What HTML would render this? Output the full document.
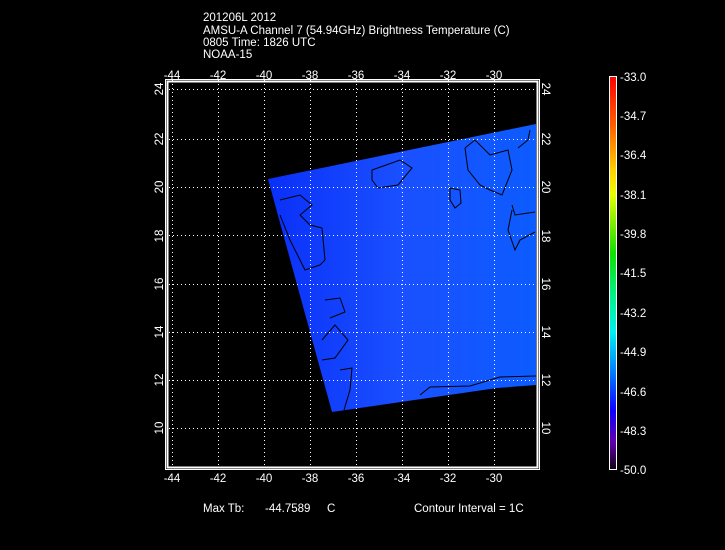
<!DOCTYPE html>
<html><head><meta charset="utf-8"><style>
html,body{margin:0;padding:0;background:#000;width:725px;height:550px;overflow:hidden}
svg{display:block}
text{font-family:"Liberation Sans",sans-serif;font-size:11.5px;fill:#fff}
</style></head><body>
<svg width="725" height="550" viewBox="0 0 725 550" xmlns="http://www.w3.org/2000/svg">
<defs>
<linearGradient id="cb" x1="0" y1="0" x2="0" y2="1">
<stop offset="0" stop-color="#ff0000"/>
<stop offset="0.12" stop-color="#ff5a00"/>
<stop offset="0.24" stop-color="#ffd000"/>
<stop offset="0.3" stop-color="#e8ff00"/>
<stop offset="0.45" stop-color="#10e000"/>
<stop offset="0.55" stop-color="#00f080"/>
<stop offset="0.65" stop-color="#00f0f0"/>
<stop offset="0.75" stop-color="#0080ff"/>
<stop offset="0.85" stop-color="#1000ff"/>
<stop offset="0.93" stop-color="#6000b0"/>
<stop offset="1" stop-color="#100010"/>
</linearGradient>
<linearGradient id="sw" x1="0" y1="0" x2="1" y2="0">
<stop offset="0" stop-color="#0a30f8"/>
<stop offset="0.5" stop-color="#1a50ff"/>
<stop offset="1" stop-color="#0c5cff"/>
</linearGradient>
</defs>
<text x="203" y="21">201206L 2012</text>
<text x="203" y="34">AMSU-A Channel 7 (54.94GHz) Brightness Temperature (C)</text>
<text x="203" y="46">0805 Time: 1826 UTC</text>
<text x="203" y="58">NOAA-15</text>

<polygon points="268,179 536,124 536,385 497,388 332,412" fill="url(#sw)"/>
<g fill="none" stroke="#000" stroke-width="1">
<polyline points="280,200 300,195 312,205 300,215 310,225 322,228 325,260 320,265 305,270 300,260 290,240 280,215"/>
<polyline points="372,170 400,160 412,168 398,185 378,188 372,180 372,170"/>
<polyline points="465,148 475,140 490,155 508,150 512,170 502,195 490,190 480,185 468,170 465,148"/>
<polyline points="450,188 460,190 461,203 455,208 450,200 450,188"/>
<polyline points="512,205 515,215 535,212"/>
<polyline points="512,210 508,230 515,250 520,240 535,232"/>
<polyline points="325,300 340,298 345,312 330,318"/>
<polyline points="322,340 335,325 348,340 335,358 322,360"/>
<polyline points="340,370 352,368 350,390 344,410"/>
<polyline points="420,395 430,387 470,386 500,377 536,376"/>
<polyline points="518,148 528,140 530,130"/>
</g>

<g stroke="#fff" stroke-width="1" stroke-dasharray="1,3" fill="none">
<line x1="172.5" y1="80" x2="172.5" y2="466"/>
<line x1="218.5" y1="80" x2="218.5" y2="466"/>
<line x1="264.5" y1="80" x2="264.5" y2="466"/>
<line x1="310.5" y1="80" x2="310.5" y2="466"/>
<line x1="356.5" y1="80" x2="356.5" y2="466"/>
<line x1="402.5" y1="80" x2="402.5" y2="466"/>
<line x1="448.5" y1="80" x2="448.5" y2="466"/>
<line x1="494.5" y1="80" x2="494.5" y2="466"/>
<line x1="169" y1="89.5" x2="536" y2="89.5"/>
<line x1="169" y1="139.5" x2="536" y2="139.5"/>
<line x1="169" y1="187.5" x2="536" y2="187.5"/>
<line x1="169" y1="235.5" x2="536" y2="235.5"/>
<line x1="169" y1="284.5" x2="536" y2="284.5"/>
<line x1="169" y1="332.5" x2="536" y2="332.5"/>
<line x1="169" y1="380.5" x2="536" y2="380.5"/>
<line x1="169" y1="428.5" x2="536" y2="428.5"/>
</g>
<rect x="165.5" y="79.5" width="374" height="390" fill="none" stroke="#fff" stroke-width="1"/>
<rect x="167.5" y="81.5" width="370" height="386" fill="none" stroke="#fff" stroke-width="2"/>

<g text-anchor="middle">
<text x="172" y="79">-44</text><text x="218" y="79">-42</text><text x="264" y="79">-40</text><text x="310" y="79">-38</text><text x="356" y="79">-36</text><text x="402" y="79">-34</text><text x="448" y="79">-32</text><text x="494" y="79">-30</text>
<text x="172" y="482">-44</text><text x="218" y="482">-42</text><text x="264" y="482">-40</text><text x="310" y="482">-38</text><text x="356" y="482">-36</text><text x="402" y="482">-34</text><text x="448" y="482">-32</text><text x="494" y="482">-30</text>
</g>
<g text-anchor="middle">
<text transform="translate(163,89) rotate(-90)">24</text>
<text transform="translate(163,139) rotate(-90)">22</text>
<text transform="translate(163,187) rotate(-90)">20</text>
<text transform="translate(163,236) rotate(-90)">18</text>
<text transform="translate(163,284) rotate(-90)">16</text>
<text transform="translate(163,332) rotate(-90)">14</text>
<text transform="translate(163,380) rotate(-90)">12</text>
<text transform="translate(163,428) rotate(-90)">10</text>
<text transform="translate(542,89) rotate(90)">24</text>
<text transform="translate(542,139) rotate(90)">22</text>
<text transform="translate(542,187) rotate(90)">20</text>
<text transform="translate(542,236) rotate(90)">18</text>
<text transform="translate(542,284) rotate(90)">16</text>
<text transform="translate(542,332) rotate(90)">14</text>
<text transform="translate(542,380) rotate(90)">12</text>
<text transform="translate(542,428) rotate(90)">10</text>
</g>

<rect x="609.5" y="76.5" width="7" height="393" fill="url(#cb)" stroke="#fff" stroke-width="1"/>
<g>
<text x="620" y="81">-33.0</text>
<text x="620" y="120">-34.7</text>
<text x="620" y="159">-36.4</text>
<text x="620" y="199">-38.1</text>
<text x="620" y="238">-39.8</text>
<text x="620" y="277">-41.5</text>
<text x="620" y="317">-43.2</text>
<text x="620" y="356">-44.9</text>
<text x="620" y="396">-46.6</text>
<text x="620" y="435">-48.3</text>
<text x="620" y="474">-50.0</text>
</g>

<text x="203" y="512">Max Tb:</text>
<text x="265" y="512">-44.7589</text>
<text x="327" y="512">C</text>
<text x="414" y="512">Contour Interval = 1C</text>
</svg>
</body></html>
